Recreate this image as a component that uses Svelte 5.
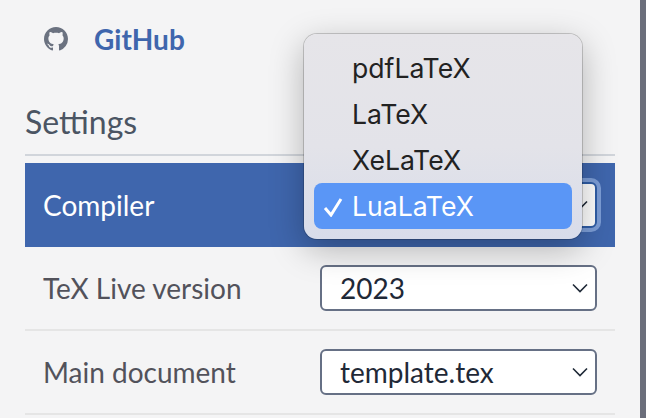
<script>
  const compilers = ['pdfLaTeX', 'LaTeX', 'XeLaTeX', 'LuaLaTeX'];
  let compiler = 'LuaLaTeX';
</script>

<div class="page">
  <aside class="sidebar">
    <a class="github" href="#top">
      <svg class="mark" viewBox="0 0 16 16" aria-hidden="true">
        <path d="M8 0C3.58 0 0 3.58 0 8c0 3.54 2.29 6.53 5.47 7.59.4.07.55-.17.55-.38 0-.19-.01-.82-.01-1.49-2.01.37-2.53-.49-2.69-.94-.09-.23-.48-.94-.82-1.13-.28-.15-.68-.52-.01-.53.63-.01 1.08.58 1.23.82.72 1.21 1.87.87 2.33.66.07-.52.28-.87.51-1.07-1.78-.2-3.64-.89-3.64-3.95 0-.87.31-1.59.82-2.15-.08-.2-.36-1.02.08-2.12 0 0 .67-.21 2.2.82.64-.18 1.32-.27 2-.27s1.36.09 2 .27c1.53-1.04 2.2-.82 2.2-.82.44 1.1.16 1.92.08 2.12.51.56.82 1.27.82 2.15 0 3.07-1.87 3.75-3.65 3.95.29.25.54.73.54 1.48 0 1.07-.01 1.93-.01 2.2 0 .21.15.46.55.38A8.01 8.01 0 0 0 16 8c0-4.42-3.58-8-8-8z" />
      </svg>
      <span>GitHub</span>
    </a>

    <h2>Settings</h2>

    <div class="row active">
      <span class="label">Compiler</span>
      <div class="select focused">
        <span class="covered">{compiler}</span>
        <svg class="chevron" viewBox="0 0 16 10" aria-hidden="true"><path d="M1 1.5l7 7 7-7" /></svg>
      </div>
    </div>
    <div class="row">
      <span class="label">TeX Live version</span>
      <div class="select">
        <span>2023</span>
        <svg class="chevron" viewBox="0 0 16 10" aria-hidden="true"><path d="M1 1.5l7 7 7-7" /></svg>
      </div>
    </div>
    <div class="row">
      <span class="label">Main document</span>
      <div class="select">
        <span>template.tex</span>
        <svg class="chevron" viewBox="0 0 16 10" aria-hidden="true"><path d="M1 1.5l7 7 7-7" /></svg>
      </div>
    </div>

    <ul class="menu">
      {#each compilers as item}
        <li class:current={item === compiler}>
          {#if item === compiler}
            <svg class="check" viewBox="0 0 20 20" aria-hidden="true"><path d="M2 11l6 7L18 2" /></svg>
          {/if}
          {item}
        </li>
      {/each}
    </ul>
  </aside>
</div>

<style>
  :global(body) {
    margin: 0;
    background: #f4f4f5;
  }

  .page {
    width: 646px;
    height: 418px;
    overflow: hidden;
    border-right: 6px solid #6b6e7b;
    box-sizing: border-box;
    font-family: Lato, sans-serif;
  }

  .sidebar {
    position: relative;
    width: 640px;
    padding: 0 25px;
    box-sizing: border-box;
  }

  .github {
    display: flex;
    align-items: center;
    gap: 26px;
    height: 78px;
    padding-left: 19px;
    color: #3f66ad;
    font-size: 28px;
    font-weight: 700;
    text-decoration: none;
  }

  .mark {
    width: 24px;
    height: 24px;
    fill: #6b7280;
  }

  h2 {
    margin: 0;
    height: 78px;
    padding-top: 24px;
    box-sizing: border-box;
    border-bottom: 2px solid #d1d5db;
    color: #4b5563;
    font-size: 32px;
    font-weight: 400;
    line-height: 40px;
  }

  .row {
    display: flex;
    align-items: center;
    justify-content: space-between;
    height: 84px;
    padding: 0 18px;
    box-sizing: border-box;
    border-bottom: 2px solid #e5e5e5;
    color: #52525b;
    font-size: 28px;
  }

  .row.active {
    margin-top: 7px;
    border-bottom: 0;
    background: #3f66ad;
    color: #fff;
  }

  .select {
    display: flex;
    align-items: center;
    justify-content: space-between;
    width: 277px;
    height: 46px;
    padding: 0 7px 0 18px;
    box-sizing: border-box;
    border: 2px solid #667085;
    border-radius: 6px;
    background: #fff;
    color: #1f2937;
  }

  .focused {
    box-shadow: 0 0 0 4px rgba(147, 178, 230, 0.75);
    border-color: #2f5da6;
  }

  /* value sits under the open menu */
  .covered {
    visibility: hidden;
  }

  .chevron {
    width: 16px;
    height: 10px;
    fill: none;
    stroke: #1f2937;
    stroke-width: 1.6;
  }

  .menu {
    position: absolute;
    left: 304px;
    top: 34px;
    width: 278px;
    height: 205px;
    margin: 0;
    padding: 11px 10px 10px;
    box-sizing: border-box;
    list-style: none;
    border-radius: 13px;
    background: linear-gradient(#e6e5e9 0%, #e3e3e9 55%, #d8dcea 100%);
    box-shadow: 0 0 0 1px rgba(0, 0, 0, 0.18), 0 10px 34px rgba(0, 0, 0, 0.28);
    color: #222;
    font-family: Inter, sans-serif;
    font-size: 26.6px;
  }

  .menu li {
    position: relative;
    height: 46px;
    padding-left: 38px;
    line-height: 46px;
    border-radius: 8px;
  }

  .menu li.current {
    background: #5a96f6;
    color: #fff;
  }

  .check {
    position: absolute;
    left: 9px;
    top: 14px;
    width: 20px;
    height: 20px;
    fill: none;
    stroke: #fff;
    stroke-width: 3;
  }
</style>
